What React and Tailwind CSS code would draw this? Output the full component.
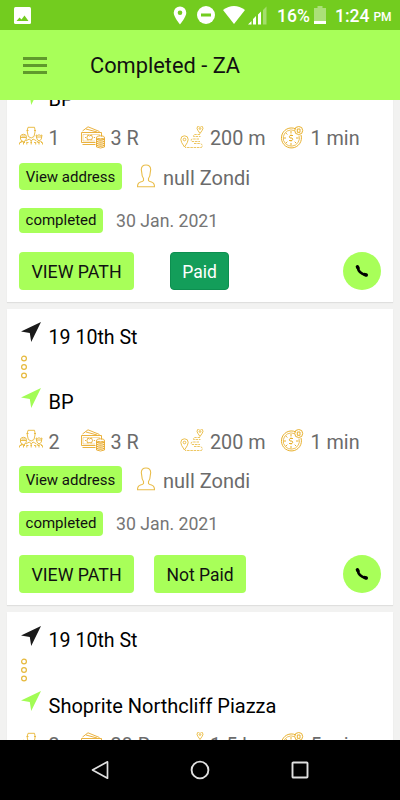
const trips = [
  {
    id: 1,
    from: "19 10th St",
    to: "BP",
    people: "1",
    price: "3 R",
    distance: "200 m",
    time: "1 min",
    client: "null Zondi",
    date: "30 Jan. 2021",
    paid: true,
  },
  {
    id: 2,
    from: "19 10th St",
    to: "BP",
    people: "2",
    price: "3 R",
    distance: "200 m",
    time: "1 min",
    client: "null Zondi",
    date: "30 Jan. 2021",
    paid: false,
  },
  {
    id: 3,
    from: "19 10th St",
    to: "Shoprite Northcliff Piazza",
    people: "2",
    price: "28 R",
    distance: "1.5 km",
    time: "5 min",
    client: "null Zondi",
    date: "30 Jan. 2021",
    paid: false,
  },
];

const Arrow = ({ className }) => (
  <svg viewBox="0 0 20 20" className={`size-5 fill-current ${className}`}>
    <path d="M20 0 L0 9.6 L8.8 11 L10.2 20 Z" />
  </svg>
);

const Dots = () => (
  <svg
    viewBox="0 0 8 24"
    className="ml-px h-6 w-2 fill-none stroke-[#e6b93c]"
    strokeWidth="1.2">
    <circle cx="4" cy="3.5" r="2.4" />
    <circle cx="4" cy="12" r="2.4" />
    <circle cx="4" cy="20.5" r="2.4" />
  </svg>
);

const PeopleIcon = () => (
  <svg
    viewBox="0 0 24 24"
    className="size-6 fill-none stroke-[#e8b535]"
    strokeWidth="0.9">
    <path d="M8.3 4 L9 1.3 H15.5 L16 4 V6 L15 10.500 Q12.200 13.500 9.300 10.500 L8.300 6 Z M7.500 4.500 H9.500 M15 4.500 H17" />
    <path d="M1.500 13 V10 Q2 8.300 4.500 8.300 Q7 8.300 7.300 10 V13 Q6.500 15.500 4.500 15.500 Q2.300 15.500 1.500 13 Z M1.500 11.500 H7.300 M2.500 10 H6.500" />
    <path d="M17 9 Q18.500 10 20 8.800 Q21.500 10 23 9 L22.300 13 Q20 16.500 18 13 Z M17 11 H23" />
    <path d="M7 15 Q9 13.500 10.500 13 L12.200 15 L14 13 Q15.500 13.500 17.500 15" />
    <path d="M0.500 18.500 V17 Q1.500 15.500 3 15.300 L4.500 16.500 L6 15.300 M18 15.300 L20 16.500 L21.500 15.300 Q23.500 16 23.500 17 V18.500 M12.200 15 V18.500 M4.500 16.500 V18.500 M20 16.500 V18.500 M7.800 16 V18.500 M16.700 16 V18.500" />
    <path d="M1 16.500 H23" strokeDasharray="1.500 2" />
  </svg>
);

const MoneyIcon = () => (
  <svg
    viewBox="0 0 24 24"
    className="size-6 fill-none stroke-[#e8a92a]"
    strokeWidth="0.9">
    <path d="M1.500 5 L7 0.800 L18.500 5.500 M5 3 L16 6" />
    <path d="M14.500 16.500 H0.500 V6.500 H20.500 V10.500" />
    <path
      d="M2 8.500 H18.500 V10 M2 8.500 V15 H14"
      strokeWidth="0.6"
      opacity="0.7"
    />
    <path d="M7 9 L8.500 10 L10.500 9 Q12.500 11.500 10.500 14 L8.500 13.500 L6.500 14 Q5 11.500 7 9 Z" />
    <path d="M4 11.500 H5 M12.800 11.500 H14" />
    <path d="M1.500 18.500 H14.500" />
    <path d="M15.500 11.500 V21 Q19.500 23 23.500 21 V11.500" />
    <ellipse cx="19.500" cy="11.300" rx="4" ry="1.500" />
    <path
      d="M15.500 13.300 Q19.500 15 23.500 13.300 M15.500 15.200 Q19.500 17 23.500 15.200 M15.500 17.200 Q19.500 19 23.500 17.200 M15.500 19.200 Q19.500 21 23.500 19.200"
      strokeWidth="1.200"
    />
  </svg>
);

const RouteIcon = () => (
  <svg
    viewBox="0 0 24 24"
    className="-ml-px size-6 fill-none stroke-[#e9b83a]"
    strokeWidth="0.9">
    <path d="M4.500 21 Q0.800 16 0.800 13.500 A3.700 3.700 0 0 1 8.200 13.500 Q8.200 16 4.500 21 Z" />
    <circle cx="4.500" cy="13.500" r="1.300" />
    <path d="M20 7.500 Q17 3.500 17 2.300 A3 2.600 0 0 1 23 2.300 Q23 3.500 20 7.500 Z" />
    <circle cx="20" cy="2.500" r="0.900" />
    <path
      d="M20 8.500 H15 Q13 9 13.500 10.500 H20.500 M19 13 H12 Q10 14 12 15.500 H20 M14 17.500 H20 Q23.500 18.500 21.500 21.500 H5"
      strokeDasharray="2.500 0.800"
      strokeWidth="0.8"
    />
  </svg>
);

const ClockIcon = () => (
  <svg
    viewBox="0 0 24 24"
    className="-ml-px size-6 fill-none stroke-[#e8b02d]"
    strokeWidth="1">
    <path d="M15.500 2.800 A10 10 0 1 0 21 9" />
    <path d="M14.500 4.600 A8.100 8.100 0 1 0 19 9.500" strokeWidth="0.8" />
    <circle cx="18.700" cy="4.500" r="4" />
    <path d="M17.300 3 H20 V6.300 H17.300 Z" />
    <path d="M11 5 V7.500 M11 17 V19.500 M3.500 12 H6 M16 12 H18.500 M5.800 7 L7.300 8.500 M16.200 17.200 L14.700 15.700 M5.800 17.200 L7.300 15.700" />
    <path d="M13 9.500 H10 Q8.700 10.800 10 12 H12 Q13.500 13.200 12 14.500 H9 M11 8.500 V9.500 M11 14.500 V15.500" />
  </svg>
);

const UserIcon = () => (
  <svg
    viewBox="0 0 18 24"
    className="h-6 w-[18px] fill-none stroke-[#e9bd4a]"
    strokeWidth="1.1">
    <path d="M6.500 14.500 Q4.800 12 4.800 9 L4.300 5.500 Q4.500 1 9 1 Q13.500 1 13.700 5.500 L13.200 9 Q13.200 12 11.500 14.500 V16.500 Q12 17.500 14.500 18 Q17.500 19 17.500 22.800 H0.500 Q0.500 19 3.500 18 Q6 17.500 6.500 16.500 Z" />
  </svg>
);

const PhoneIcon = () => (
  <svg
    viewBox="0 0 14 14"
    className="size-[14px] fill-none stroke-black"
    strokeLinecap="round"
    strokeLinejoin="round">
    <path d="M2.600 3 Q3.500 9.500 10.800 11" strokeWidth="2.400" />
    <path d="M2.400 2.700 L3.100 4 M9.800 10.600 L11.300 11" strokeWidth="3.400" />
  </svg>
);

const StatusBar = () => (
  <div className="flex h-[30px] shrink-0 items-center bg-[#73cc1f] text-white">
    <svg viewBox="0 0 17 17" className="ml-[14px] size-[17px]">
      <rect width="17" height="17" rx="1.500" fill="currentColor" />
      <path
        d="M2.500 14 L5.500 10.500 L7.500 12.500 L10.500 8.500 L14.500 14 Z"
        fill="#73cc1f"
      />
    </svg>
    <svg viewBox="0 0 14 19" className="ml-[142px] h-[19px] w-[14px]">
      <path
        d="M7 0.500 A6.300 6.300 0 0 0 0.700 6.800 C0.700 11 7 18.500 7 18.500 S13.300 11 13.300 6.800 A6.300 6.300 0 0 0 7 0.500 Z"
        fill="currentColor"
      />
      <circle cx="7" cy="6.800" r="2.300" fill="#73cc1f" />
    </svg>
    <svg viewBox="0 0 18 18" className="ml-[10px] size-[18px]">
      <circle cx="9" cy="9" r="9" fill="currentColor" />
      <rect x="4" y="7.500" width="10" height="3" fill="#73cc1f" />
    </svg>
    <svg viewBox="0 0 22 18" className="ml-2 h-[18px] w-[22px] fill-current">
      <path d="M0 4 Q11 -4 22 4 L11 18 Z" />
    </svg>
    <svg viewBox="0 0 19 19" className="ml-[3px] size-[19px] fill-current">
      <path d="M0 18.500 L3.500 15 V18.500 Z M5 18.500 V13 L8 10 V18.500 Z M10 18.500 V8.500 L13 5.500 V18.500 Z" />
      <path d="M15 18.500 V4 L18.500 0.500 V18.500 Z" opacity="0.350" />
    </svg>
    <span className="ml-[10px] w-[37px] pt-0.5 text-[17.500px] font-medium whitespace-nowrap">
      16%
    </span>
    <svg viewBox="0 0 12 18" className="h-[18px] w-3 fill-current">
      <path d="M0 2 H3.500 V0 H8.500 V2 H12 V15 H0 Z" opacity="0.400" />
      <rect y="15" width="12" height="3" />
    </svg>
    <span className="ml-[9px] pt-px text-[17.500px] leading-6 font-medium">
      1:24
    </span>
    <span className="mt-1 ml-1 text-[12px] font-medium">PM</span>
  </div>
);

const Header = () => (
  <div className="flex h-[70px] shrink-0 items-center bg-[#a8ff59]">
    <div className="ml-[23px] flex flex-col gap-1">
      <span className="h-[3px] w-6 bg-[#5f9a2c]" />
      <span className="h-[3px] w-6 bg-[#5f9a2c]" />
      <span className="h-[3px] w-6 bg-[#5f9a2c]" />
    </div>
    <h1 className="ml-[43px] pt-[3px] text-[21.800px] whitespace-nowrap text-[#111]">
      Completed - ZA
    </h1>
  </div>
);

const TripCard = ({ trip }) => (
  <div className="h-[296px] shrink-0 bg-white px-3 pt-[13px] shadow-[0_1px_1px_rgba(0,0,0,0.08)]">
    <div className="flex h-[29px] items-center">
      <Arrow className="ml-0.5 -mt-2 text-[#1a1a1a]" />
      <span className="ml-[7.500px] pt-0.5 text-[19.600px] text-black">
        {trip.from}
      </span>
    </div>
    <div className="flex h-8 items-center">
      <Dots />
    </div>
    <div className="mt-[5px] flex h-7 items-center">
      <Arrow className="ml-0.5 -mt-2 text-[#a2fc55]" />
      <span className="ml-[7.500px] pt-px text-[20px] whitespace-nowrap text-black">
        {trip.to}
      </span>
    </div>
    <div className="mt-[5px] flex h-10 items-center text-[19.800px] whitespace-nowrap text-[#6b6b6b]">
      <PeopleIcon />
      <span className="ml-[5.500px] w-8 pt-[3px]">{trip.people}</span>
      <MoneyIcon />
      <span className="ml-[6px] w-[70px] pt-[3px]">{trip.price}</span>
      <RouteIcon />
      <span className="ml-[6.500px] w-[70.500px] pt-[3px]">
        {trip.distance}
      </span>
      <ClockIcon />
      <span className="ml-[7px] pt-[3px]">{trip.time}</span>
    </div>
    <div className="mt-[5px] flex h-[27px] items-center">
      <button className="h-[27px] w-[103px] rounded-[4px] bg-[#a8ff59] pt-0.5 text-[15px] whitespace-nowrap text-[#111]">
        View address
      </button>
      <div className="ml-[15px]">
        <UserIcon />
      </div>
      <span className="ml-2 pt-[3px] text-[20px] text-[#6b6b6b]">
        {trip.client}
      </span>
    </div>
    <div className="mt-[18px] flex h-[25px] items-center">
      <span className="flex h-[25px] w-[84px] items-center justify-center rounded-[4px] bg-[#a8ff59] text-[15px] text-[#111]">
        completed
      </span>
      <span className="ml-[13px] pt-0.5 text-[17.700px] text-[#757575]">
        {trip.date}
      </span>
    </div>
    <div className="mt-[19px] flex h-[38px] items-center text-[18px]">
      <button className="h-[38px] w-[115px] rounded-[4px] bg-[#a8ff59] pt-[3px] text-[17.800px] whitespace-nowrap text-[#111]">
        VIEW PATH
      </button>
      {trip.paid ? (
        <button className="ml-9 h-[38px] w-[59px] rounded-[4px] border border-[#0d8f50] bg-[#139e5a] pt-[3px] text-[17.500px] text-white">
          Paid
        </button>
      ) : (
        <button className="ml-5 h-[38px] w-[92px] rounded-[4px] bg-[#a8ff59] pt-[3px] text-[17.500px] whitespace-nowrap text-[#111]">
          Not Paid
        </button>
      )}
      <button className="ml-auto flex size-[38px] items-center justify-center rounded-full bg-[#a8ff59]">
        <PhoneIcon />
      </button>
    </div>
  </div>
);

const NavBar = () => (
  <div className="flex h-[60px] shrink-0 items-center justify-center gap-20 bg-black">
    <svg
      viewBox="0 0 20 20"
      className="size-5 fill-none stroke-[#e0e0e0]"
      strokeWidth="1.700"
      strokeLinejoin="round">
      <path d="M17.500 1.800 V18.200 L2.500 10 Z" />
    </svg>
    <svg
      viewBox="0 0 20 20"
      className="size-5 fill-none stroke-[#e0e0e0]"
      strokeWidth="1.900">
      <circle cx="10" cy="10" r="8.400" />
    </svg>
    <svg
      viewBox="0 0 20 20"
      className="size-5 fill-none stroke-[#e0e0e0]"
      strokeWidth="1.900">
      <rect x="2.500" y="2.500" width="15" height="15" rx="0.800" />
    </svg>
  </div>
);

const App = () => {
  return (
    <div className="flex h-[800px] w-[400px] flex-col overflow-hidden bg-[#f2f2f1] font-['Roboto',sans-serif]">
      <StatusBar />
      <Header />
      <div className="min-h-0 flex-1 overflow-hidden px-[7px]">
        {/* the list is scrolled part way into the first trip */}
        <div className="-mt-[94.500px] flex flex-col gap-[7.400px]">
          {trips.map((trip) => (
            <TripCard key={trip.id} trip={trip} />
          ))}
        </div>
      </div>
      <NavBar />
    </div>
  );
};

export default App;
